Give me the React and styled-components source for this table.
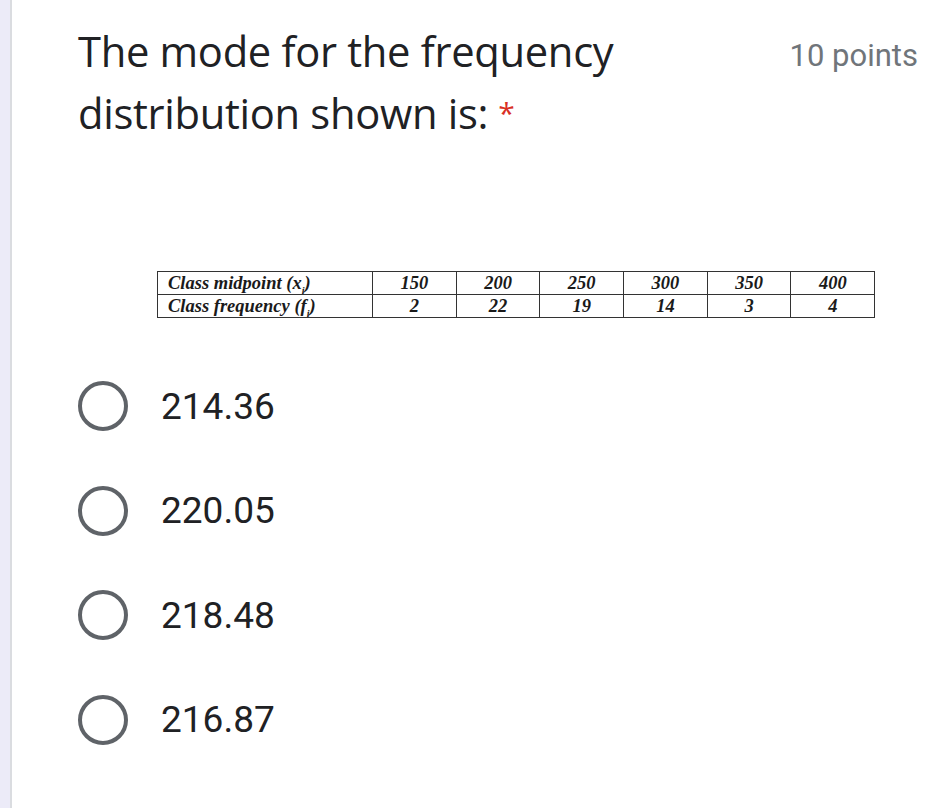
import React from "react";
import styled, { createGlobalStyle } from "styled-components";

const Global = createGlobalStyle`
  html, body { margin: 0; padding: 0; background: #fff; }
  body { width: 934px; height: 808px; overflow: hidden; }
`;

const Page = styled.div`
  display: flex;
  width: 934px;
  height: 808px;
`;

const Strip = styled.div`
  width: 10px;
  flex: none;
  background: #ecebf8;
  border-right: 2px solid #dadce0;
`;

const Card = styled.div`
  flex: 1;
  display: flex;
  flex-direction: column;
  padding: 20px 16px 0 66px;
`;

const Header = styled.div`
  display: flex;
  justify-content: space-between;
  align-items: flex-start;
`;

const Title = styled.div`
  font-family: "Open Sans", sans-serif;
  font-size: 41.7px;
  line-height: 62px;
  color: #202124;
  letter-spacing: -0.3px;
`;

const Asterisk = styled.span`
  color: #d93025;
  margin-left: 10px;
  font-size: 30px;
  position: relative;
  top: -5px;
`;

const Points = styled.div`
  font-family: Roboto, sans-serif;
  font-size: 31px;
  color: #70757a;
  line-height: 62px;
  margin-top: 5px;
`;

const TableWrap = styled.div`
  padding: 122px 0 0 79px;
`;

const Table = styled.table`
  border-collapse: collapse;
  table-layout: fixed;
  width: 717px;
  font-family: "Liberation Serif", "Times New Roman", serif;
  font-style: italic;
  font-weight: bold;
  font-size: 18.5px;
  color: #1a1a1a;
`;

const Cell = styled.td`
  border: 1.5px solid #333;
  height: 22px;
  padding: 0 ${(p) => (p.$label ? "10px" : "0")};
  text-align: ${(p) => (p.$label ? "left" : "center")};
  line-height: 21px;
  white-space: nowrap;
  overflow: hidden;
`;

const Col = styled.col`
  width: ${(p) => p.$w}px;
`;

const Sub = styled.sub`
  font-size: 10px;
  line-height: 0;
`;

const Options = styled.div`
  display: flex;
  flex-direction: column;
  padding-top: 36px;
`;

const Option = styled.div`
  display: flex;
  align-items: center;
  height: 104.5px;
  gap: 33px;
`;

const Radio = styled.div`
  width: 42px;
  height: 42px;
  border: 4.5px solid #5f6368;
  border-radius: 50%;
  flex: none;
`;

const OptionLabel = styled.div`
  font-family: Roboto, sans-serif;
  font-size: 37px;
  color: #202124;
`;

const mids = ["150", "200", "250", "300", "350", "400"];
const freqs = ["2", "22", "19", "14", "3", "4"];
const options = ["214.36", "220.05", "218.48", "216.87"];

export default function App() {
  return (
    <>
      <Global />
      <Page>
        <Strip />
        <Card>
          <Header>
            <Title>
              The mode for the frequency
              <br />
              distribution shown is:<Asterisk>*</Asterisk>
            </Title>
            <Points>10 points</Points>
          </Header>
          <TableWrap>
            <Table>
              <colgroup>
                <Col $w={215} />
                {mids.map((m) => (
                  <Col key={m} $w={83.7} />
                ))}
              </colgroup>
              <tbody>
                <tr>
                  <Cell $label>
                    Class midpoint (x<Sub>i</Sub>)
                  </Cell>
                  {mids.map((m) => (
                    <Cell key={m}>{m}</Cell>
                  ))}
                </tr>
                <tr>
                  <Cell $label>
                    Class frequency (f<Sub>i</Sub>)
                  </Cell>
                  {freqs.map((f, i) => (
                    <Cell key={i}>{f}</Cell>
                  ))}
                </tr>
              </tbody>
            </Table>
          </TableWrap>
          <Options>
            {options.map((o) => (
              <Option key={o}>
                <Radio />
                <OptionLabel>{o}</OptionLabel>
              </Option>
            ))}
          </Options>
        </Card>
      </Page>
    </>
  );
}
